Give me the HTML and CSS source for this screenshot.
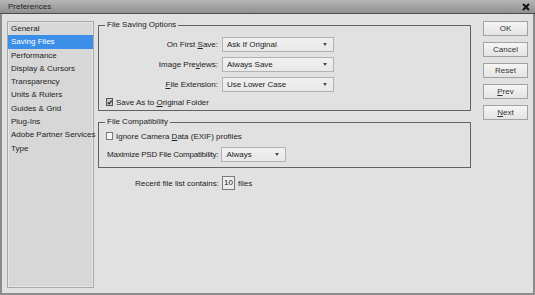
FILE: index.html
```html
<!DOCTYPE html>
<html lang="en">
<head>
    <meta charset="UTF-8">
    <title>Preferences</title>
    <link rel="stylesheet" href="styles.css">
</head>
<body>
    <div class="window">
        <div class="titlebar">
            <span class="title">Preferences</span>
            <svg class="close" width="8" height="8" viewBox="0 0 8 8">
                <path d="M1 1 L7 7 M7 1 L1 7" stroke="#111" stroke-width="2" fill="none"/>
            </svg>
        </div>

        <div class="content">
            <ul class="sidebar">
                <li>General</li>
                <li class="active">Saving Files</li>
                <li>Performance</li>
                <li>Display &amp; Cursors</li>
                <li>Transparency</li>
                <li>Units &amp; Rulers</li>
                <li>Guides &amp; Grid</li>
                <li>Plug-Ins</li>
                <li>Adobe Partner Services</li>
                <li>Type</li>
            </ul>

            <div class="panel">
                <fieldset class="group group-saving">
                    <legend>File Saving Options</legend>
                    <div class="form-grid">
                        <span class="label">On First <u>S</u>ave:</span>
                        <div class="select">Ask If Original</div>
                        <span class="label">Image Pre<u>v</u>iews:</span>
                        <div class="select">Always Save</div>
                        <span class="label"><u>F</u>ile Extension:</span>
                        <div class="select">Use Lower Case</div>
                    </div>
                    <div class="check-row">
                        <span class="checkbox checked">
                            <svg width="7" height="7" viewBox="0 0 7 7">
                                <path d="M1 3.5 L3 5.5 L6.5 1" stroke="#2a2a2a" stroke-width="1.6" fill="none"/>
                            </svg>
                        </span>
                        <span>Save As to <u>O</u>riginal Folder</span>
                    </div>
                </fieldset>

                <fieldset class="group group-compat">
                    <legend>File Compatibility</legend>
                    <div class="check-row">
                        <span class="checkbox"></span>
                        <span>Ignore Camera <u>D</u>ata (EXIF) profiles</span>
                    </div>
                    <div class="compat-row">
                        <span class="label-tight">Maximize PSD File Compatibility:</span>
                        <div class="select select-small">Always</div>
                    </div>
                </fieldset>

                <div class="recent-row">
                    <span class="label">Recent file list contains:</span>
                    <div class="num-input">10</div>
                    <span>files</span>
                </div>
            </div>

            <div class="buttons">
                <button class="btn">OK</button>
                <button class="btn">Cancel</button>
                <button class="btn">Reset</button>
                <button class="btn"><u>P</u>rev</button>
                <button class="btn"><u>N</u>ext</button>
            </div>
        </div>
    </div>
</body>
</html>
```

FILE: styles.css
```css
* {
    margin: 0;
    padding: 0;
    box-sizing: border-box;
}

body {
    font-family: 'Liberation Sans', Arial, sans-serif;
    font-size: 8px;
    color: #222;
    background: #e1e1e1;
    width: 535px;
    height: 295px;
    overflow: hidden;
}

u {
    text-decoration: underline;
    text-underline-offset: 1px;
}

.window {
    display: flex;
    flex-direction: column;
    height: 295px;
}

/* Barra de título */
.titlebar {
    height: 14px;
    flex: none;
    display: flex;
    align-items: center;
    justify-content: space-between;
    padding: 0 5px 0 8px;
    background: linear-gradient(#b6b6b6, #909090);
    border-bottom: 1px solid #4c4c4c;
}

.title {
    color: #1e1e1e;
}

.content {
    flex: 1;
    display: flex;
    align-items: flex-start;
    padding: 6px 5px 5px 5px;
    border: 2px solid #8c8c8c;
    border-top: none;
}

/* Lista lateral */
.sidebar {
    list-style: none;
    width: 87px;
    height: 267px;
    margin-top: 1px;
    background: #d7d7d7;
    border: 1px solid #a9a9a9;
    box-shadow: inset 0 0 0 1px #e6e6e6;
}

.sidebar li {
    height: 13.3px;
    line-height: 13.3px;
    padding-left: 3px;
    white-space: nowrap;
}

.sidebar li.active {
    background: #3c8fe8;
    color: #fff;
}

/* Panel central */
.panel {
    width: 373px;
    margin-left: 4px;
}

.group {
    border: 1px solid #636363;
    padding: 7px 0 3px 0;
}

.group legend {
    margin-left: 6px;
    padding: 0 2px;
    line-height: 10px;
}

.group-compat {
    margin-top: 6px;
    padding: 4px 0 5px 0;
}

.form-grid {
    display: grid;
    grid-template-columns: 119px 112px;
    column-gap: 4px;
    row-gap: 5px;
}

.label {
    text-align: right;
    align-self: center;
    white-space: nowrap;
}

.select {
    height: 15px;
    display: flex;
    align-items: center;
    justify-content: space-between;
    padding: 0 6px 0 4px;
    background: linear-gradient(#f0f0f0, #e8e8e8);
    border: 1px solid #b2b2b2;
}

.select::after {
    content: '';
    border-left: 2.5px solid transparent;
    border-right: 2.5px solid transparent;
    border-top: 3px solid #4a4a4a;
}

.select-small {
    width: 65px;
}

.check-row {
    display: flex;
    align-items: center;
    gap: 3px;
    height: 10px;
    margin-top: 5px;
    padding-left: 7px;
}

.group-compat .check-row {
    margin-top: 0;
}

.checkbox {
    width: 7px;
    height: 8px;
    display: flex;
    align-items: center;
    justify-content: center;
    border: 1px solid #7a7a7a;
    background: #f3f3f3;
}

.checkbox.checked {
    background: #c9c9c9;
    border-color: #555;
}

.compat-row {
    display: flex;
    align-items: center;
    gap: 3px;
    margin-top: 6px;
    padding-left: 8px;
}

.label-tight {
    letter-spacing: -0.2px;
    white-space: nowrap;
}

.recent-row {
    display: grid;
    grid-template-columns: 121px 13px auto;
    column-gap: 3px;
    align-items: center;
    margin-top: 8px;
}

.num-input {
    height: 14px;
    line-height: 12px;
    text-align: center;
    border: 1px solid #7a7a7a;
    background: #ececec;
}

/* Botones */
.buttons {
    display: flex;
    flex-direction: column;
    gap: 6px;
    margin-left: 12px;
    margin-top: 1px;
}

.btn {
    width: 45px;
    height: 15px;
    font-family: inherit;
    font-size: 8px;
    color: #333;
    background: linear-gradient(#f5f5f5, #e4e4e4);
    border: 1px solid #a2a2a2;
}
```
